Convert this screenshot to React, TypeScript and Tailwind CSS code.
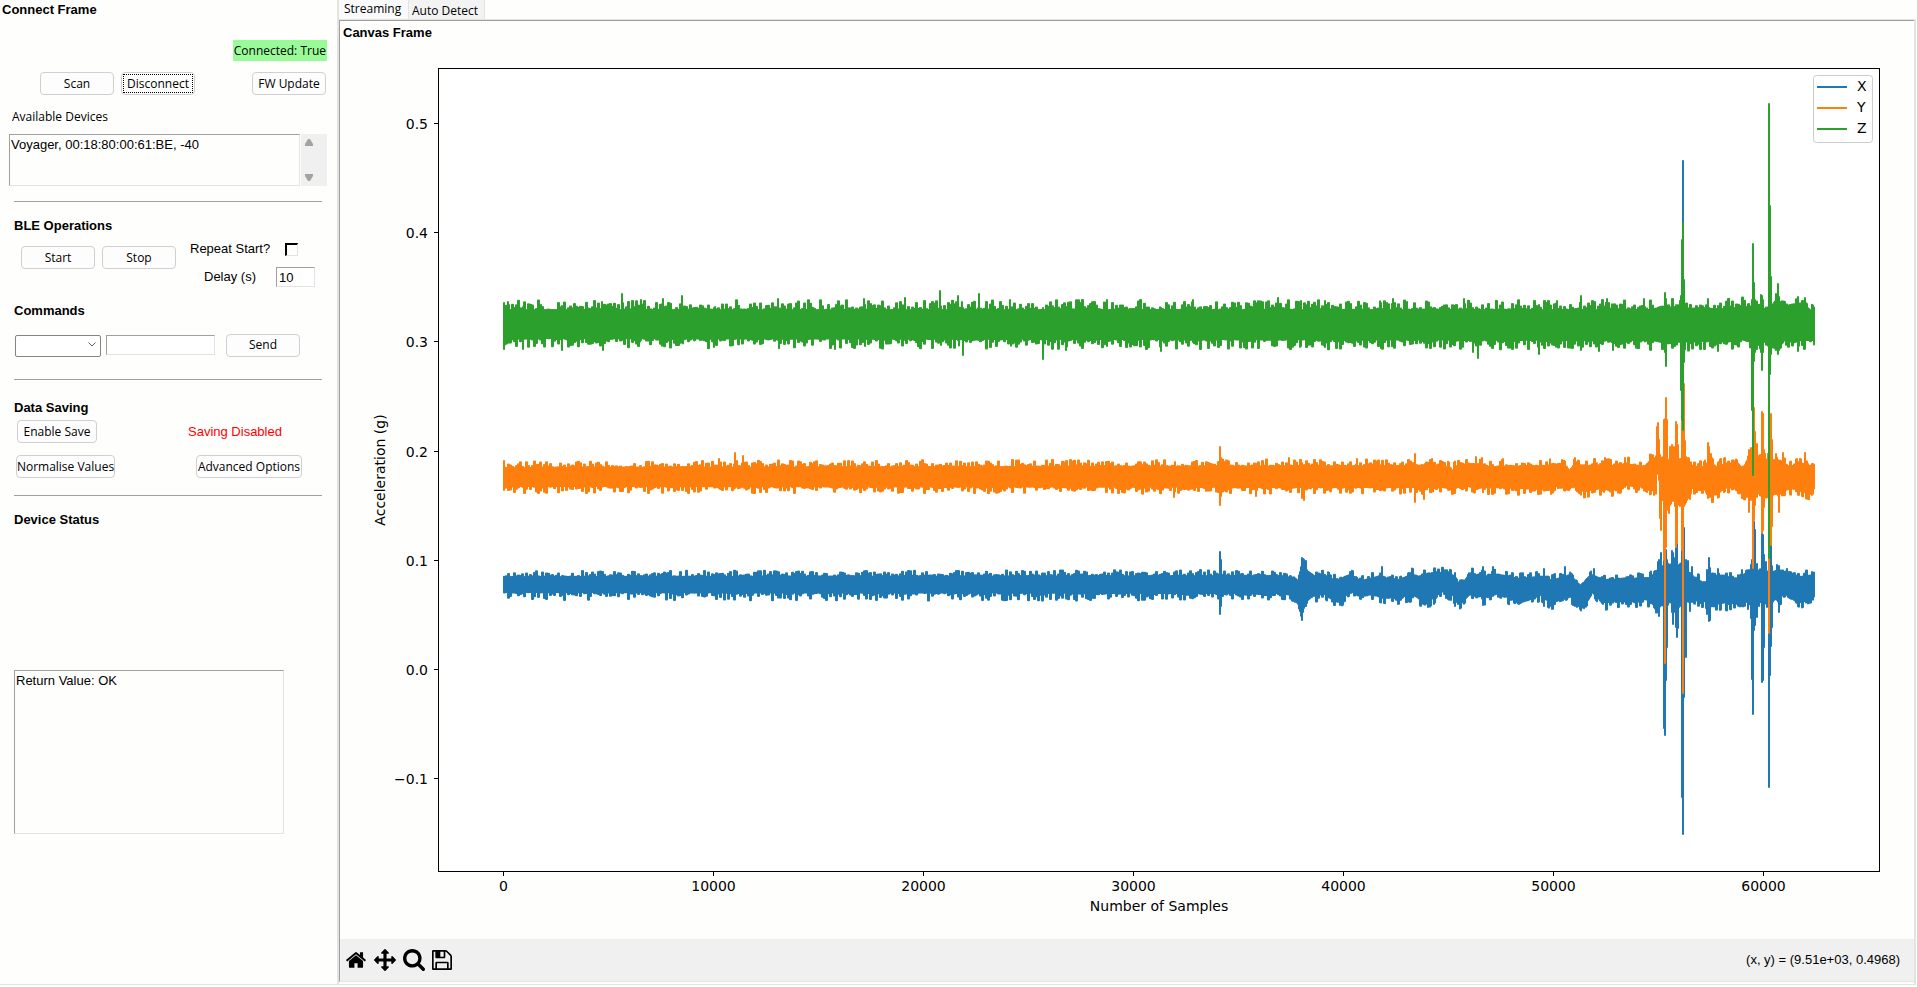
import React from 'react';

type Column = [x: number, high: number, low: number];

interface Trace {
  name: string;
  color: string;
  seed: number;
  highNoise: number;
  lowNoise: number;
  // slow drift of the band, linearly interpolated between the points
  band: Column[];
  // single columns that leave the band
  spikes: Column[];
}

const FIRST_X = 504;
const LAST_X = 1814;

const traces: Trace[] = [
  {
    name: 'X',
    color: '#1f77b4',
    seed: 11,
    highNoise: 6,
    lowNoise: 8,
    band: [
      [503, 577, 592], [1285, 576, 593], [1294, 579, 595], [1298, 583, 600], [1301, 568, 614], [1304, 565, 608],
      [1308, 572, 600], [1314, 576, 594], [1325, 576, 594], [1332, 580, 599], [1340, 580, 599], [1350, 575, 592],
      [1360, 581, 593], [1380, 577, 596], [1398, 581, 598], [1412, 574, 594], [1417, 577, 597], [1428, 575, 604],
      [1437, 573, 592], [1447, 573, 591], [1454, 577, 596], [1458, 583, 604], [1464, 582, 600], [1470, 574, 594],
      [1485, 577, 597], [1500, 575, 593], [1520, 579, 603], [1540, 577, 594], [1552, 581, 602], [1570, 575, 595],
      [1575, 581, 600], [1581, 586, 609], [1586, 580, 600], [1592, 575, 592], [1603, 580, 602], [1650, 578, 599],
      [1656, 572, 606], [1664, 568, 604], [1680, 568, 600], [1690, 576, 600], [1705, 584, 601], [1712, 576, 606],
      [1722, 576, 602], [1740, 579, 604], [1752, 572, 600], [1770, 572, 602], [1785, 572, 594], [1800, 577, 600],
      [1814, 575, 596],
    ],
    spikes: [
      [1220, 552, 614], [1221, 560, 606], [1302, 558, 620], [1303, 559, 612], [1306, 561, 606], [1455, 573, 606],
      [1382, 567, 598], [1483, 567, 605], [1493, 567, 596], [1544, 569, 606], [1565, 567, 598], [1594, 569, 594],
      [1658, 562, 610], [1659, 560, 616], [1661, 553, 602], [1664, 520, 728], [1665, 525, 735], [1666, 550, 680],
      [1667, 560, 647], [1669, 567, 600], [1672, 551, 612], [1673, 553, 624], [1675, 558, 612], [1676, 548, 627],
      [1677, 542, 637], [1678, 565, 628], [1680, 564, 606], [1682, 470, 797], [1683, 161, 834], [1684, 528, 697],
      [1686, 560, 657], [1688, 561, 600], [1690, 573, 611], [1692, 567, 602], [1707, 570, 614], [1709, 558, 621],
      [1710, 568, 620], [1718, 569, 600], [1742, 570, 600], [1749, 570, 600], [1751, 565, 618], [1752, 560, 679],
      [1753, 500, 714], [1754, 522, 630], [1755, 530, 625], [1757, 564, 617], [1762, 530, 682], [1763, 535, 680],
      [1764, 555, 647], [1766, 562, 602], [1769, 450, 787], [1770, 500, 675], [1771, 545, 646], [1772, 566, 627],
      [1777, 565, 600], [1779, 566, 612], [1787, 569, 594], [1812, 572, 598],
    ],
  },
  {
    name: 'Y',
    color: '#ff7f0e',
    seed: 47,
    highNoise: 7,
    lowNoise: 7,
    band: [
      [503, 468, 486], [1445, 466, 487], [1452, 471, 489], [1458, 465, 487], [1470, 464, 486], [1490, 467, 487],
      [1550, 466, 489], [1560, 464, 485], [1569, 472, 490], [1575, 463, 482], [1583, 466, 491], [1600, 466, 488],
      [1612, 466, 490], [1625, 464, 485], [1645, 467, 487], [1650, 461, 490], [1658, 460, 486], [1662, 464, 500],
      [1680, 460, 500], [1686, 462, 498], [1692, 466, 488], [1704, 468, 486], [1709, 460, 496], [1717, 468, 494],
      [1725, 464, 487], [1734, 463, 488], [1742, 470, 492], [1749, 459, 494], [1758, 461, 493], [1772, 460, 494],
      [1780, 462, 493], [1790, 468, 488], [1800, 464, 490], [1808, 466, 494], [1814, 465, 487],
    ],
    spikes: [
      [504, 461, 490], [719, 459, 488], [735, 453, 488], [743, 456, 487], [1174, 466, 497], [1220, 447, 505],
      [1221, 458, 496], [1256, 466, 496], [1289, 458, 487], [1302, 463, 498], [1304, 465, 500], [1357, 459, 487],
      [1415, 454, 502], [1424, 467, 499], [1432, 459, 490], [1476, 457, 486], [1482, 458, 487], [1503, 459, 487],
      [1551, 465, 494], [1605, 458, 490], [1625, 458, 487], [1654, 458, 495], [1657, 427, 470], [1658, 423, 474],
      [1659, 440, 480], [1660, 455, 518], [1661, 463, 530], [1664, 420, 560], [1665, 419, 663], [1666, 398, 547],
      [1667, 420, 510], [1669, 462, 513], [1670, 447, 505], [1672, 445, 500], [1674, 447, 500], [1676, 422, 547],
      [1677, 425, 543], [1678, 445, 505], [1682, 385, 550], [1683, 385, 693], [1684, 384, 506], [1685, 441, 504],
      [1687, 459, 500], [1690, 466, 499], [1708, 443, 498], [1709, 447, 497], [1711, 454, 497], [1749, 450, 512],
      [1751, 448, 500], [1753, 407, 568], [1754, 408, 520], [1755, 432, 505], [1757, 444, 497], [1762, 412, 533],
      [1763, 414, 530], [1764, 450, 507], [1769, 400, 633], [1771, 414, 545], [1772, 440, 526], [1776, 454, 494],
      [1779, 463, 512], [1783, 453, 492], [1805, 453, 492], [1808, 464, 499],
    ],
  },
  {
    name: 'Z',
    color: '#2ca02c',
    seed: 83,
    highNoise: 10,
    lowNoise: 10,
    band: [
      [503, 310, 338], [1150, 310, 339], [1650, 310, 340], [1665, 307, 342], [1700, 309, 341], [1725, 309, 341],
      [1745, 307, 339], [1760, 305, 342], [1767, 312, 340], [1775, 302, 348], [1785, 306, 340], [1805, 306, 340],
      [1814, 313, 340],
    ],
    spikes: [
      [504, 303, 349], [508, 302, 338], [523, 307, 349], [562, 306, 350], [603, 308, 350], [622, 294, 340],
      [641, 300, 340], [663, 299, 340], [682, 296, 340], [714, 308, 347], [778, 299, 340], [835, 308, 349],
      [864, 299, 340], [905, 298, 340], [940, 291, 340], [958, 296, 340], [963, 308, 355], [979, 294, 340],
      [1010, 300, 340], [1043, 308, 359], [1066, 307, 350], [1107, 300, 346], [1161, 308, 351], [1193, 300, 342],
      [1278, 298, 340], [1301, 301, 346], [1325, 301, 347], [1381, 303, 348], [1393, 299, 340], [1464, 299, 340],
      [1473, 308, 352], [1478, 312, 358], [1497, 301, 340], [1539, 305, 354], [1557, 301, 342], [1581, 296, 350],
      [1599, 309, 351], [1607, 299, 340], [1613, 310, 350], [1644, 299, 340], [1665, 293, 352], [1666, 299, 366],
      [1681, 296, 390], [1682, 240, 420], [1683, 223, 430], [1684, 280, 362], [1708, 299, 340], [1718, 306, 351],
      [1752, 300, 410], [1753, 244, 475], [1754, 283, 361], [1755, 300, 352], [1761, 295, 352], [1762, 296, 370],
      [1763, 300, 352], [1769, 104, 558], [1770, 206, 374], [1771, 277, 354], [1776, 294, 350], [1778, 284, 354],
      [1779, 297, 350], [1798, 297, 351], [1804, 305, 349],
    ],
  },
];

const xTicks = [0, 10000, 20000, 30000, 40000, 50000, 60000];
const yTicks = [0.5, 0.4, 0.3, 0.2, 0.1, 0.0, -0.1];

// small LCG, keeps the noise the same on every render
function createRandom(seed: number) {
  let state = seed;
  return () => {
    state = (state * 1664525 + 1013904223) % 4294967296;
    return state / 4294967296;
  };
}

function tracePath({ seed, band, spikes, highNoise, lowNoise }: Trace) {
  const random = createRandom(seed);
  const points: string[] = [];
  let segment = 0;
  let up = 0;
  let down = 0;

  for (let x = FIRST_X; x <= LAST_X; x++) {
    while (segment < band.length - 2 && band[segment + 1][0] < x) segment++;
    const [x0, high0, low0] = band[segment];
    const [x1, high1, low1] = band[segment + 1];
    const t = (x - x0) / (x1 - x0);
    if (x % 2 === 0) {
      up = highNoise * random() ** 2;
      down = lowNoise * random() ** 2;
    }
    let high = high0 + (high1 - high0) * t - up;
    let low = low0 + (low1 - low0) * t + down;
    const spike = spikes.find(([spikeX]) => spikeX === x);
    if (spike) {
      high = spike[1];
      low = spike[2];
    }
    points.push(`M${x} ${high.toFixed(1)}V${low.toFixed(1)}`);
  }
  return points.join('');
}

function Chart() {
  return (
    <svg
      viewBox="340 43 1574 896"
      className="min-h-0 w-full flex-1"
      fontFamily="'DejaVu Sans', sans-serif"
      fontSize="14"
      role="img"
      aria-label="Acceleration by number of samples"
    >
      <rect x="438.5" y="68.5" width="1441" height="803" fill="#fff" />
      {traces.map((trace) => (
        <path key={trace.name} d={tracePath(trace)} stroke={trace.color} strokeWidth="2" strokeLinecap="round" fill="none" />
      ))}
      <rect x="438.5" y="68.5" width="1441" height="803" fill="none" stroke="#000" />
      {xTicks.map((tick) => {
        const x = 503.5 + (tick / 1000) * 21;
        return (
          <g key={tick}>
            <path d={`M${x} 872v4`} stroke="#000" />
            <text x={x} y="891" textAnchor="middle">
              {tick}
            </text>
          </g>
        );
      })}
      {yTicks.map((tick) => {
        const y = Math.round(669 - tick * 1092) + 0.5;
        return (
          <g key={tick}>
            <path d={`M434 ${y}h4`} stroke="#000" />
            <text x="428" y={y + 5} textAnchor="end">
              {tick.toFixed(1).replace('-', '−')}
            </text>
          </g>
        );
      })}
      <text x="1159" y="911" textAnchor="middle">
        Number of Samples
      </text>
      <text transform="translate(385 470) rotate(-90)" textAnchor="middle">
        Acceleration (g)
      </text>
      <rect x="1813.5" y="75.5" width="59" height="67" rx="3" fill="#fff" stroke="#ccc" />
      {traces.map((trace, index) => (
        <g key={trace.name}>
          <path d={`M1817 ${87 + index * 21}h30`} stroke={trace.color} strokeWidth="2" />
          <text x="1857" y={91 + index * 21}>
            {trace.name}
          </text>
        </g>
      ))}
    </svg>
  );
}

interface PushButtonProps {
  children: React.ReactNode;
  className?: string;
  focused?: boolean;
}

function PushButton({ children, className = 'w-[74px]', focused = false }: PushButtonProps) {
  return (
    <button
      type="button"
      className={`h-[23px] rounded border border-[#d0d0d0] bg-[#fdfdfd] p-px font-['Open_Sans',sans-serif] text-xs leading-none whitespace-nowrap ${className}`}
    >
      <span className={`flex h-full items-center justify-center ${focused ? 'border border-dotted border-black' : ''}`}>
        {children}
      </span>
    </button>
  );
}

function Heading({ children }: { children: React.ReactNode }) {
  return <h2 className="text-[13px] leading-5 font-bold">{children}</h2>;
}

const sunken = 'border border-t-[#a0a0a0] border-r-[#e3e3e3] border-b-[#e3e3e3] border-l-[#a0a0a0]';

function ConnectPanel() {
  return (
    <aside className="flex w-[339px] shrink-0 flex-col border-r-2 border-b border-[#e3e3e3]">
      <div className="pl-0.5">
        <Heading>Connect Frame</Heading>
      </div>
      <div className="mt-5 flex justify-end pr-2.5">
        <span className="bg-[#98fb98] px-px font-['Open_Sans',sans-serif] text-xs leading-[21px]">Connected: True</span>
      </div>
      <div className="mt-[11px] flex pr-[11px] pl-10">
        <PushButton>Scan</PushButton>
        <PushButton className="ml-[7px] w-[74px]" focused>
          Disconnect
        </PushButton>
        <PushButton className="ml-auto w-[74px]">FW Update</PushButton>
      </div>
      <div className="mt-3 pl-3 font-['Open_Sans',sans-serif] text-xs leading-5" id="devices-label">
        Available Devices
      </div>
      <div className="mt-[7px] flex h-[52px] gap-px pr-2.5 pl-[9px]">
        <ul aria-labelledby="devices-label" className={`flex-1 px-px text-[13px] leading-5 ${sunken}`}>
          <li>Voyager, 00:18:80:00:61:BE, -40</li>
        </ul>
        <div className="flex w-[26px] flex-col justify-between bg-[#f0f0f0] py-[5px] pl-1">
          <svg viewBox="0 0 8 7" className="h-[7px] w-2 fill-[#a3a3a3]">
            <path d="M3 0h2l3 5v2H0V5z" />
          </svg>
          <svg viewBox="0 0 8 7" className="h-[7px] w-2 fill-[#a3a3a3]">
            <path d="M3 7h2l3-5V0H0v2z" />
          </svg>
        </div>
      </div>

      <section className="mt-[15px] mr-[15px] ml-3.5 border-t border-[#a0a0a0] pt-3.5">
        <Heading>BLE Operations</Heading>
        <div className="flex">
          <div className="flex gap-[7px] pt-2.5 pl-[7px]">
            <PushButton>Start</PushButton>
            <PushButton>Stop</PushButton>
          </div>
          <div className="ml-auto flex w-[132px] flex-col text-[13px]">
            <div className="flex items-center pt-[3px]">
              <label htmlFor="repeat" className="leading-5">
                Repeat Start?
              </label>
              <input
                id="repeat"
                type="checkbox"
                className="mr-6 ml-auto h-[13px] w-[13px] appearance-none border border-t-2 border-l-2 border-t-black border-r-[#e3e3e3] border-b-[#e3e3e3] border-l-black bg-white"
              />
            </div>
            <div className="flex items-center pt-2 pl-3.5">
              <label htmlFor="delay" className="leading-5">
                Delay (s)
              </label>
              <input id="delay" type="text" defaultValue="10" className={`mr-[7px] ml-auto h-5 w-[39px] bg-white px-0.5 ${sunken}`} />
            </div>
          </div>
        </div>
        <div className="mt-3.5">
          <Heading>Commands</Heading>
        </div>
        <div className="mt-3 flex items-center pl-px">
          <div className="relative">
            <select aria-label="Command" className="h-[22px] w-[86px] appearance-none rounded-xs border border-[#858585] bg-white text-xs">
              <option></option>
            </select>
            <svg viewBox="0 0 8 5" className="pointer-events-none absolute top-[9px] right-[5px] h-[5px] w-2 fill-none stroke-[#606060]">
              <path d="M.5.5 4 4 7.5.5" />
            </svg>
          </div>
          <input type="text" aria-label="Command value" className={`ml-[5px] h-5 w-[109px] bg-white px-0.5 text-[13px] ${sunken}`} />
          <PushButton className="ml-[11px] w-[74px]">Send</PushButton>
        </div>
      </section>

      <section className="mt-[22px] mr-[15px] ml-3.5 border-t border-[#a0a0a0] pt-[18px]">
        <Heading>Data Saving</Heading>
        <div className="mt-0.5 flex items-center pl-[3px]">
          <PushButton className="w-20">Enable Save</PushButton>
          <span className="ml-[91px] text-[13px] leading-5 text-[#ff0000]">Saving Disabled</span>
        </div>
        <div className="mt-3 flex justify-between pr-5 pl-0.5">
          <PushButton className="w-[99px]">Normalise Values</PushButton>
          <PushButton className="w-[106px]">Advanced Options</PushButton>
        </div>
      </section>

      <section className="mt-[17px] mr-[15px] ml-3.5 border-t border-[#a0a0a0] pt-3.5">
        <Heading>Device Status</Heading>
        <textarea
          aria-label="Device Status"
          readOnly
          defaultValue="Return Value: OK"
          className={`mt-[140px] block h-[164px] w-[270px] resize-none bg-transparent px-px text-[13px] leading-5 ${sunken}`}
        />
      </section>
    </aside>
  );
}

const toolbarIcons = [
  {
    label: 'Home',
    viewBox: '0 0 1792 1792',
    size: 'h-[22px] w-[22px]',
    path: 'M1472 992v480q0 26-19 45t-45 19h-384v-384h-256v384h-384q-26 0-45-19t-19-45v-480q0-1 .5-3t.5-3l575-474 575 474q1 2 1 6zm223-69l-62 74q-8 9-21 11h-3q-13 0-21-7l-692-577-692 577q-12 8-24 7-13-2-21-11l-62-74q-8-10-7-23.5t11-21.5l719-599q32-26 76-26t76 26l244 204v-195q0-14 9-23t23-9h192q14 0 23 9t9 23v408l219 182q10 8 11 21.5t-7 23.5z',
  },
  {
    label: 'Pan',
    viewBox: '0 0 1792 1792',
    size: 'h-[22px] w-[22px]',
    path: 'M1792 896q0 26-19 45l-256 256q-19 19-45 19t-45-19-19-45v-128h-384v384h128q26 0 45 19t19 45-19 45l-256 256q-19 19-45 19t-45-19l-256-256q-19-19-19-45t19-45 45-19h128v-384h-384v128q0 26-19 45t-45 19-45-19l-256-256q-19-19-19-45t19-45l256-256q19-19 45-19t45 19 19 45v128h384v-384h-128q-26 0-45-19t-19-45 19-45l256-256q19-19 45-19t45 19l256 256q19 19 19 45t-19 45-45 19h-128v384h384v-128q0-26 19-45t45-19 45 19l256 256q19 19 19 45z',
  },
  {
    label: 'Zoom',
    viewBox: '64 128 1664 1664',
    size: 'h-[22px] w-[22px]',
    path: 'M1216 832q0-185-131.5-316.5t-316.5-131.5-316.5 131.5-131.5 316.5 131.5 316.5 316.5 131.5 316.5-131.5 131.5-316.5zm512 832q0 52-38 90t-90 38q-54 0-90-38l-343-342q-179 124-399 124-143 0-273.5-55.5t-225-150-150-225-55.5-273.5 55.5-273.5 150-225 225-150 273.5-55.5 273.5 55.5 225 150 150 225 55.5 273.5q0 220-124 399l343 343q37 37 37 90z',
  },
  {
    label: 'Save',
    viewBox: '0 128 1536 1536',
    size: 'h-5 w-5',
    path: 'M384 1536h768v-384h-768v384zM1280 1536h128v-896q0-14-10-38.5t-20-34.5l-281-281q-10-10-34-20t-39-10v416q0 40-28 68t-68 28h-576q-40 0-68-28t-28-68v-416h-128v1280h128v-416q0-40 28-68t68-28h832q40 0 68 28t28 68v416zM896 608v-320q0-13-9.5-22.5t-22.5-9.5h-192q-13 0-22.5 9.5t-9.5 22.5v320q0 13 9.5 22.5t22.5 9.5h192q13 0 22.5-9.5t9.5-22.5zM1536 640v928q0 40-28 68t-68 28h-1344q-40 0-68-28t-28-68v-1344q0-40 28-68t68-28h928q40 0 88 20t76 48l280 280q28 28 48 76t20 88z',
  },
];

export default function App() {
  return (
    <div className="flex h-screen min-h-[860px] bg-[#fefefc] pb-0.5 font-['Liberation_Sans',Arial,sans-serif] text-black">
      <ConnectPanel />
      <main className="flex min-w-0 flex-1 flex-col">
        <div role="tablist" className="flex h-[19px] font-['Open_Sans',sans-serif] text-xs">
          <button type="button" role="tab" aria-selected="true" className="w-[70px] border-r border-[#e3e3e3] bg-[#fafafa] pb-0.5 pl-[5px] text-left leading-4">
            Streaming
          </button>
          <button type="button" role="tab" aria-selected="false" className="w-[76px] border-r border-[#e3e3e3] bg-[#f3f3f3] pt-0.5 pl-[3px] text-left leading-4">
            Auto Detect
          </button>
        </div>
        <div className="mr-px flex min-h-0 flex-1 flex-col border-t border-r-2 border-b border-[#e3e3e3]">
          <div className="mb-0.5 flex min-h-0 flex-1 flex-col border-t border-b border-l border-t-[#a0a0a0] border-b-[#e3e3e3] border-l-[#a0a0a0]">
            <div className="pt-0.5 pl-[3px]">
              <Heading>Canvas Frame</Heading>
            </div>
            <Chart />
            <div className="flex h-[42px] shrink-0 items-center bg-[#f0f0f0] pr-3.5 pl-[5px]">
              <div className="flex items-center gap-[7px]">
                {toolbarIcons.map((icon) => (
                  <button key={icon.label} type="button" aria-label={icon.label}>
                    <svg viewBox={icon.viewBox} className={icon.size}>
                      <path d={icon.path} />
                    </svg>
                  </button>
                ))}
              </div>
              <span className="ml-auto text-[13px] leading-5">(x, y) = (9.51e+03, 0.4968)</span>
            </div>
          </div>
        </div>
      </main>
    </div>
  );
}
